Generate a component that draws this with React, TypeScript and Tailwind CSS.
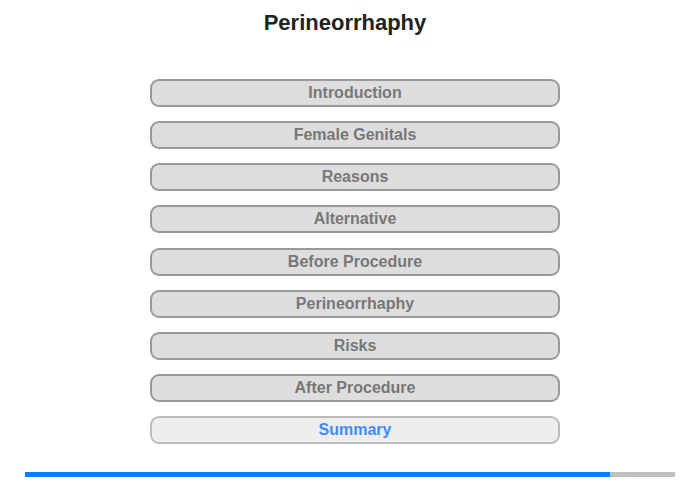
const sections = [
  "Introduction",
  "Female Genitals",
  "Reasons",
  "Alternative",
  "Before Procedure",
  "Perineorrhaphy",
  "Risks",
  "After Procedure",
];

export default function App() {
  return (
    <div
      className="w-[700px] h-[480px] bg-white flex flex-col"
      style={{ fontFamily: '"Liberation Sans", Arial, sans-serif' }}
    >
      {/* Title */}
      <h1 className="w-[690px] pt-[10px] h-[79px] text-center text-[22px] leading-[26px] font-bold text-[#222]">
        Perineorrhaphy
      </h1>

      {/* Menu */}
      <div className="flex flex-col gap-[14.15px] pl-[150px]">
        {sections.map((s) => (
          <button
            key={s}
            className="w-[410px] h-[28px] rounded-[9px] border-2 border-[#999] bg-[#ddd] text-[16px] leading-[24px] font-bold text-[#777]"
          >
            {s}
          </button>
        ))}
        <button className="w-[410px] h-[28px] rounded-[9px] border-2 border-[#bbb] bg-[#eee] text-[16px] leading-[24px] font-bold text-[#3d8bff]">
          Summary
        </button>
      </div>

      {/* Progress */}
      <div className="mt-[28px] ml-[25px] w-[650px] h-[5px] bg-[#c0c0c0] flex">
        <div className="h-full w-[585px] bg-[#007fff]" />
      </div>
    </div>
  );
}
